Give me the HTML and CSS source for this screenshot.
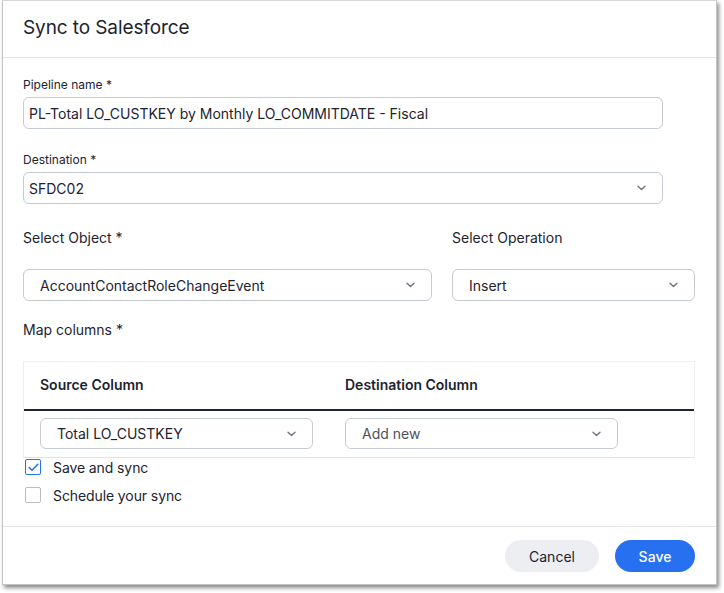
FILE: index.html
```html
<!DOCTYPE html>
<html>
<head>
<meta charset="utf-8">
<link rel="stylesheet" href="styles.css">
</head>
<body>
<div class="modal">
  <div class="header"><h1 class="title">Sync to Salesforce</h1></div>
  <div class="content">
    <div class="field">
      <label class="label">Pipeline name *</label>
      <div class="input wide">PL-Total LO_CUSTKEY by Monthly LO_COMMITDATE - Fiscal</div>
    </div>
    <div class="field">
      <label class="label">Destination *</label>
      <div class="input wide select"><span>SFDC02</span><svg class="chev" width="9" height="6" viewBox="0 0 9 6"><path d="M1 1.2l3.5 3.3 3.5-3.3" fill="none" stroke="#6b7280" stroke-width="1.4" stroke-linecap="round" stroke-linejoin="round"/></svg></div>
    </div>
    <div class="pair">
      <div class="col obj">
        <div class="label big">Select Object *</div>
        <div class="input select pad"><span>AccountContactRoleChangeEvent</span><svg class="chev" width="9" height="6" viewBox="0 0 9 6"><path d="M1 1.2l3.5 3.3 3.5-3.3" fill="none" stroke="#6b7280" stroke-width="1.4" stroke-linecap="round" stroke-linejoin="round"/></svg></div>
      </div>
      <div class="col op">
        <div class="label big">Select Operation</div>
        <div class="input select pad"><span>Insert</span><svg class="chev" width="9" height="6" viewBox="0 0 9 6"><path d="M1 1.2l3.5 3.3 3.5-3.3" fill="none" stroke="#6b7280" stroke-width="1.4" stroke-linecap="round" stroke-linejoin="round"/></svg></div>
      </div>
    </div>
    <div class="label big map">Map columns *</div>
    <div class="table">
      <div class="thead">
        <div class="th">Source Column</div>
        <div class="th">Destination Column</div>
      </div>
      <div class="trow">
        <div class="input select pad cell"><span>Total LO_CUSTKEY</span><svg class="chev" width="9" height="6" viewBox="0 0 9 6"><path d="M1 1.2l3.5 3.3 3.5-3.3" fill="none" stroke="#6b7280" stroke-width="1.4" stroke-linecap="round" stroke-linejoin="round"/></svg></div>
        <div class="input select pad cell muted"><span>Add new</span><svg class="chev" width="9" height="6" viewBox="0 0 9 6"><path d="M1 1.2l3.5 3.3 3.5-3.3" fill="none" stroke="#6b7280" stroke-width="1.4" stroke-linecap="round" stroke-linejoin="round"/></svg></div>
      </div>
    </div>
    <div class="checks">
      <div class="check"><span class="box on"><svg width="11" height="9" viewBox="0 0 11 9"><path d="M1.2 4.5l2.8 2.8 5.8-6" fill="none" stroke="#2770ef" stroke-width="1.6" stroke-linecap="round" stroke-linejoin="round"/></svg></span>Save and sync</div>
      <div class="check"><span class="box"></span>Schedule your sync</div>
    </div>
  </div>
  <div class="footer">
    <button class="btn cancel">Cancel</button>
    <button class="btn save">Save</button>
  </div>
</div>
</body>
</html>
```
FILE: styles.css
```css
* { box-sizing: border-box; }
html, body { margin: 0; padding: 0; background: #fff; }
body {
  font-family: Inter, "Noto Sans", sans-serif;
  color: #1d232f;
  width: 724px;
  height: 593px;
}
.modal {
  margin-left: 2px;
  width: 715px;
  height: 585px;
  border: 1px solid #c4c4c4;
  border-top-color: #d6d6d6;
  background: #fff;
  box-shadow: 2px 3px 4px rgba(0,0,0,0.45);
  display: flex;
  flex-direction: column;
}
.header {
  height: 57px;
  flex: none;
  border-bottom: 1px solid #e5e7eb;
  padding: 0 0 3px 20px;
  display: flex;
  align-items: center;
}
.title {
  margin: 0;
  font-size: 19px;
  font-weight: 400;
  letter-spacing: -0.1px;
  color: #1d232f;
}
.content {
  flex: 1;
  padding: 19px 21px 0 20px;
}
.label {
  display: block;
  font-size: 12px;
  color: #1d232f;
  height: 20px;
  line-height: 16px;
}
.label.big { font-size: 14px; line-height: 18px; }
.input {
  height: 32px;
  border: 1px solid #c6cad1;
  border-radius: 6px;
  font-size: 14px;
  color: #1d232f;
  display: flex;
  align-items: center;
  padding: 0 16px 0 5px;
}
.wide { width: 640px; }
.field { margin-bottom: 23px; }
.field + .field { margin-bottom: 25px; }
.select { justify-content: space-between; }
.pad { padding-left: 16px; }
.chev { flex: none; }
.pair { display: flex; gap: 20px; }
.pair .label.big { height: 40px; }
.obj { width: 409px; }
.op { width: 243px; }
.map { margin-top: 20px; height: 40px; }
.table {
  width: 672px;
  border: 1px solid #eceef1;
  border-bottom: 1px solid #dfe2e6;
}
.thead {
  display: flex;
  height: 49px;
  align-items: center;
  border-bottom: 2px solid #1d232f;
  padding: 0 0 2px 16px;
}
.th {
  font-size: 14px;
  font-weight: 600;
  width: 305px;
}
.trow {
  display: flex;
  gap: 32px;
  padding: 7px 0 8px 16px;
}
.cell { width: 273px; height: 31px; }
.muted { color: #4b5260; }
.checks {
  display: flex;
  flex-direction: column;
  gap: 10px;
}
.check {
  display: flex;
  align-items: center;
  font-size: 14px;
  letter-spacing: -0.1px;
  height: 18px;
}
.box {
  width: 16px;
  height: 16px;
  border: 1px solid #b8bcc4;
  border-radius: 2px;
  margin: 0 12px 0 2px;
  display: flex;
  align-items: center;
  justify-content: center;
}
.box.on { border-color: #2770ef; }
.footer {
  height: 58px;
  flex: none;
  border-top: 1px solid #e5e7eb;
  display: flex;
  justify-content: flex-end;
  align-items: flex-start;
  gap: 16px;
  padding: 13px 21px 0 0;
}
.btn {
  height: 32px;
  border: none;
  border-radius: 16px;
  font-family: Inter, "Noto Sans", sans-serif;
  font-size: 14px;
  padding: 0;
}
.cancel { width: 94px; background: #eceef2; color: #1d232f; }
.save { width: 80px; background: #2770ef; color: #fff; font-weight: 500; }
```
